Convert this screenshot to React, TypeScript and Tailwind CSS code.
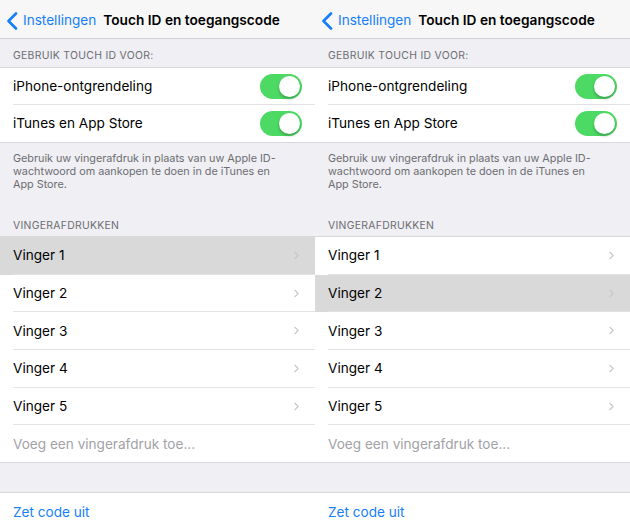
import { ChevronRight } from 'lucide-react';

const fingers = ['Vinger 1', 'Vinger 2', 'Vinger 3', 'Vinger 4', 'Vinger 5'];

function Toggle() {
  return (
    <div className="w-[42px] h-[25px] rounded-full bg-[#4cd964] p-[2px] flex justify-end">
      <div className="w-[21px] h-[21px] rounded-full bg-white shadow-[0_2px_3px_rgba(0,0,0,0.25)]" />
    </div>
  );
}

function Panel({ active }: { active: number }) {
  return (
    <div className="w-[315px] h-[530px] bg-[#efeff4] flex flex-col overflow-hidden">
      {/* nav */}
      <div className="h-[39px] shrink-0 bg-[#f7f7f7] border-b border-[#d2d2d6] flex items-center pt-[3px]">
        <svg width="12" height="18" viewBox="0 0 12 18" className="ml-[6px] mr-[5px]">
          <path d="M10 1.5 L2.5 9 L10 16.5" fill="none" stroke="#157efb" strokeWidth="2.6" strokeLinecap="round" strokeLinejoin="round" />
        </svg>
        <span className="text-[#157efb] text-[13.6px]">Instellingen</span>
        <span className="ml-[7px] text-black font-semibold text-[13.7px]">Touch ID en toegangscode</span>
      </div>

      <div className="h-[28px] shrink-0 flex items-end pb-[3px] px-[13px] text-[10.4px] tracking-[0.3px] text-[#6d6d72]">
        GEBRUIK TOUCH ID VOOR:
      </div>

      <div className="bg-white border-y border-[#d8d8dc]">
        <div className="h-[37px] flex items-center ml-[13px] pr-[13px] border-b border-[#e2e2e6]">
          <span className="flex-1 text-[13.6px] text-black">iPhone-ontgrendeling</span>
          <Toggle />
        </div>
        <div className="h-[37px] flex items-center ml-[13px] pr-[13px]">
          <span className="flex-1 text-[13.6px] text-black">iTunes en App Store</span>
          <Toggle />
        </div>
      </div>

      <div className="px-[13px] pt-[9px] text-[10.8px] leading-[13px] text-[#6d6d72]">
        Gebruik uw vingerafdruk in plaats van uw Apple ID-
        <br />
        wachtwoord om aankopen te doen in de iTunes en
        <br />
        App Store.
      </div>

      <div className="h-[45px] shrink-0 flex items-end pb-[2px] px-[13px] text-[10.4px] tracking-[0.3px] text-[#6d6d72]">
        VINGERAFDRUKKEN
      </div>

      <div className="bg-white border-y border-[#d8d8dc]">
        {fingers.map((f, i) => (
          <div key={f} className={i === active ? 'bg-[#d9d9d9]' : 'bg-white'}>
            <div className="h-[37.7px] flex items-center ml-[13px] pr-[12px] border-b border-[#e2e2e6]">
              <span className="flex-1 text-[13.6px] text-black">{f}</span>
              <ChevronRight className="w-[13px] h-[13px] text-[#c7c7cc]" strokeWidth={2} />
            </div>
          </div>
        ))}
        <div className="h-[37px] flex items-center ml-[13px]">
          <span className="text-[13.6px] text-[#a2a2a7]">Voeg een vingerafdruk toe...</span>
        </div>
      </div>

      <div className="h-[29px] shrink-0" />

      <div className="bg-white border-y border-[#d8d8dc]">
        <div className="h-[37px] flex items-center ml-[13px]">
          <span className="text-[13.6px] text-[#157efb]">Zet code uit</span>
        </div>
      </div>
    </div>
  );
}

export default function App() {
  return (
    <div className="w-[630px] h-[530px] flex overflow-hidden font-['Inter','Liberation_Sans',sans-serif]">
      <Panel active={0} />
      <Panel active={1} />
    </div>
  );
}
